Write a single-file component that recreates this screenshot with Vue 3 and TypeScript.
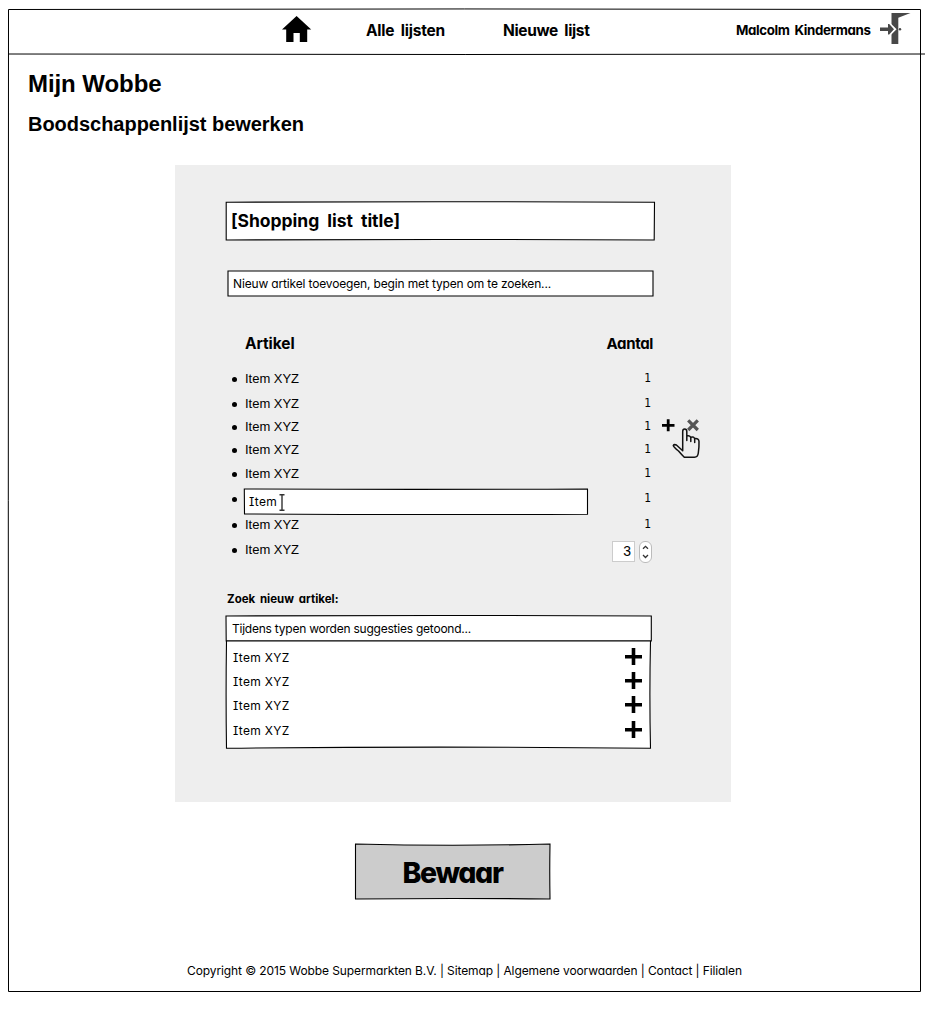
<script setup lang="ts">
import type { Directive } from 'vue'

interface Row {
  label: string
  count: string
  height: number
  kind?: 'actions' | 'edit' | 'stepper'
}

// Spreads the lettering of an element over the given width.
const vFit: Directive<HTMLElement, number> = {
  mounted(el, { value }) {
    const natural = el.getBoundingClientRect().width
    const letters = (el.textContent ?? '').trim().length
    el.style.letterSpacing = `${(value - natural) / letters}px`
  },
}

const rows: Row[] = [
  { label: 'Item XYZ', count: '1', height: 25 },
  { label: 'Item XYZ', count: '1', height: 23 },
  { label: 'Item XYZ', count: '1', height: 23, kind: 'actions' },
  { label: 'Item XYZ', count: '1', height: 24 },
  { label: 'Item XYZ', count: '1', height: 25 },
  { label: 'Item', count: '1', height: 26, kind: 'edit' },
  { label: 'Item XYZ', count: '1', height: 25 },
  { label: 'Item XYZ', count: '3', height: 25, kind: 'stepper' },
]

const suggestions = [
  { label: 'Item XYZ', height: 24 },
  { label: 'Item XYZ', height: 24 },
  { label: 'Item XYZ', height: 25 },
  { label: 'Item XYZ', height: 24 },
]
</script>

<template>
  <div class="page">
    <svg class="frame" width="931" height="1026" viewBox="0 0 931 1026">
      <path d="M8.5 9.5Q465 8.4 920.5 9.5V991.5H8.5Q8.1 500 8.5 9.5Z" />
      <path d="M8.5 54Q465 55 925 54" />
    </svg>

    <header class="top">
      <svg class="home" width="30" height="27" viewBox="0 0 30 27">
        <path d="M14.6 0L29.2 13.5H25.2V26H17.8V17H11.5V26H4.2V13.5H0Z" />
      </svg>
      <a class="nav first"><span v-fit="79">Alle lijsten</span></a>
      <a class="nav second"><span v-fit="86.5">Nieuwe lijst</span></a>
      <span class="user"><span v-fit="134.5">Malcolm Kindermans</span></span>
      <svg class="exit" width="31" height="31" viewBox="0 0 31 31">
        <path d="M11.5 0H30.5L18.3 4.8V31H11.5Z" />
        <path class="halo" d="M7.5 10.5L10.5 11.5L15.2 16.2L10.5 21L7.5 22Z" />
        <path d="M0 14.5H8V11H9.2L14 16.2L9.2 21.4H8V17.9H0Z" />
        <circle cx="20" cy="16.2" r="1.2" />
      </svg>
    </header>

    <h1><span v-fit="133.5">Mijn Wobbe</span></h1>
    <h2><span v-fit="276">Boodschappenlijst bewerken</span></h2>

    <main class="panel">
      <div class="box title">
        <svg class="edge" viewBox="0 0 429 38">
          <path d="M.2 .3Q215 -.8 428.5 .3L428.2 38Q215 37 .2 38Z" />
        </svg>
        <span class="ink" v-fit="169">[Shopping list title]</span>
      </div>
      <div class="box search">
        <svg class="edge" viewBox="0 0 425 26">
          <path d="M0 0Q215 -.8 425 0V25H0Z" />
        </svg>
        <span class="ink" v-fit="318">Nieuw artikel toevoegen, begin met typen om te zoeken...</span>
      </div>

      <div class="columns">
        <span v-fit="49.5">Artikel</span>
        <span class="amount" v-fit="46.5">Aantal</span>
      </div>

      <ul class="items">
        <li v-for="(row, i) in rows" :key="i" :style="{ height: row.height + 'px' }">
          <i class="dot"></i>
          <div v-if="row.kind === 'edit'" class="box edit">
            <svg class="edge" viewBox="0 0 344 26">
              <path d="M.3 0Q170 .8 343.5 0V25.2Q170 26 .5 25Z" />
            </svg>
            <span class="ink" v-fit="28">{{ row.label }}</span>
            <svg class="caret" width="6" height="17" viewBox="0 0 6 17">
              <path d="M.5 .7H2.4L3 1.2L3.6 .7H5.5M3 1V16M.5 16.3H2.4L3 15.8L3.6 16.3H5.5" />
            </svg>
          </div>
          <span v-else class="label" v-fit="54">{{ row.label }}</span>
          <div v-if="row.kind === 'stepper'" class="stepper">
            <span class="value">{{ row.count }}</span>
            <svg width="13" height="22" viewBox="0 0 13 22">
              <rect x=".5" y=".5" width="12" height="21" rx="5.5" />
              <path d="M4 7.8L6.5 5.3L9 7.8M4 14L6.5 16.5L9 14" />
            </svg>
          </div>
          <span v-else class="count">{{ row.count }}</span>
          <svg v-if="row.kind === 'actions'" class="actions" width="40" height="42" viewBox="0 0 40 42">
            <path class="plus" d="M0 9.3H12.5M6.2 3.3V15.2" />
            <path class="cross" d="M26.2 4.4L35.8 14M35.8 4.4L26.2 14" />
            <path
              class="hand"
              d="M20.7 31.5V15.5Q20.7 13 22.7 13Q24.8 13 24.8 15.5V24.5M24.8 20Q28.5 19.2 28.8 22V25.5M28.8 21.3Q32.2 20.2 32.7 23V26.5M32.7 22.6Q36.9 22 37 25.5Q37.2 31 36.3 37Q35.8 41.2 32.5 41.2H22.3Q19.5 38.5 16.5 35Q11.6 31 11.3 29.6Q12 28 14.4 29L20.7 34.7V30"
            />
          </svg>
        </li>
      </ul>

      <p class="prompt"><span v-fit="111.5">Zoek nieuw artikel:</span></p>
      <div class="box query">
        <svg class="edge" viewBox="0 0 425 25">
          <path d="M0 0Q215 -1 425.3 0V25H.2Z" />
        </svg>
        <span class="ink" v-fit="239">Tijdens typen worden suggesties getoond...</span>
      </div>
      <div class="box results">
        <svg class="edge" viewBox="0 0 425 107">
          <path d="M.5 0Q-.3 54 .5 107.3Q215 105 424.5 107.3Q423.3 54 424.5 0Z" />
        </svg>
        <div v-for="(s, i) in suggestions" :key="i" class="result" :style="{ height: s.height + 'px' }">
          <span v-fit="56.5">{{ s.label }}</span>
          <svg width="17" height="17" viewBox="0 0 17 17"><path d="M0 8.7H17M8.5 0V17" /></svg>
        </div>
      </div>
    </main>

    <button class="box save" type="button">
      <svg class="edge" viewBox="0 0 195 55">
        <path d="M.5 0Q98 2.5 195 0Q194.5 27 195 55Q98 54 .5 55Z" />
      </svg>
      <span class="ink" v-fit="100">Bewaar</span>
    </button>

    <footer>
      <span v-fit="555">Copyright © 2015 Wobbe Supermarkten B.V. | Sitemap | Algemene voorwaarden | Contact | Filialen</span>
    </footer>
  </div>
</template>

<style>
body {
  margin: 0;
  background: #fff;
}
</style>

<style scoped>
.page {
  position: relative;
  box-sizing: border-box;
  width: 931px;
  height: 1026px;
  padding-top: 9px;
  overflow: hidden;
  color: #000;
  font: 12px/16px "Comic Sans MS", Inter, sans-serif;
  font-feature-settings: "cv11", "cv08";
}
span {
  white-space: nowrap;
}
.frame {
  position: absolute;
  top: 0;
  left: 0;
  fill: none;
  stroke: #000;
  pointer-events: none;
}
.top {
  display: flex;
  align-items: center;
  height: 42px;
  padding: 0 20px 0 282px;
  font-weight: 700;
  line-height: 20px;
}
.home {
  margin-top: -2px;
}
.nav {
  width: 82px;
  padding-top: 2px;
  font-size: 15.5px;
  word-spacing: 3px;
}
.first {
  margin-left: 54px;
}
.second {
  margin-left: 55px;
}
.user {
  width: 135px;
  margin-left: auto;
  font-size: 13.3px;
  word-spacing: 2px;
}
.exit {
  margin: -3px 0 0 9px;
  fill: #484848;
}
.exit .halo {
  fill: #fff;
  stroke: #fff;
  stroke-width: 2;
}
h1,
h2 {
  margin: 0 0 0 28px;
  font-family: "Liberation Sans", Arial, sans-serif;
  font-weight: 700;
}
h1 {
  margin-top: 19px;
  font-size: 24px;
  line-height: 28px;
}
h2 {
  margin-top: 14px;
  font-size: 20px;
  line-height: 24px;
}
.panel {
  box-sizing: border-box;
  width: 556px;
  height: 637px;
  margin: 29px 0 0 175px;
  padding: 37px 0 0 51px;
  background: #eee;
}
.box {
  position: relative;
  display: flex;
  align-items: center;
}
.edge {
  position: absolute;
  inset: 0;
  width: 100%;
  height: 100%;
  overflow: visible;
  fill: #fff;
  stroke: #000;
  stroke-width: 1.1;
}
.ink {
  position: relative;
}
.title {
  width: 429px;
  height: 38px;
  padding-left: 5px;
  box-sizing: border-box;
  font-size: 17.5px;
  font-weight: 700;
  word-spacing: 4px;
}
.search {
  box-sizing: border-box;
  width: 425px;
  height: 26px;
  margin: 31px 0 0 2px;
  padding-left: 5px;
}
.columns {
  display: flex;
  justify-content: space-between;
  width: 408px;
  margin: 37px 0 0 19px;
  font-size: 15.5px;
  font-weight: 700;
  line-height: 20px;
}
.amount {
  font-size: 15px;
}
.items {
  width: 419px;
  margin: 14px 0 0 6px;
  padding: 0;
  list-style: none;
}
li {
  position: relative;
  display: flex;
  align-items: flex-start;
}
.dot {
  flex: none;
  width: 5px;
  height: 5px;
  margin: 9px 8px 0 0;
  border-radius: 50%;
  background: #000;
}
.label {
  font: 13px/21px "Liberation Sans", Arial, sans-serif;
}
.edit {
  box-sizing: border-box;
  flex: none;
  width: 344px;
  height: 26px;
  margin: 1px 0 0 -1px;
  padding-left: 5px;
}
.caret {
  position: relative;
  margin-left: 2px;
  fill: none;
  stroke: #333;
  stroke-width: 1.4;
}
.count {
  margin-left: auto;
  font: 12px/20px "Comic Sans MS", "DejaVu Sans Condensed", "DejaVu Sans", sans-serif;
}
.stepper {
  display: flex;
  gap: 4px;
  margin: 2px -1px 0 auto;
}
.value {
  box-sizing: border-box;
  width: 23px;
  height: 21px;
  padding-right: 3px;
  border: 1px solid #ccc;
  background: #fff;
  font: 14px/19px "Liberation Sans", Arial, sans-serif;
  text-align: right;
}
.stepper svg {
  fill: #fff;
  stroke: #bbb;
}
.stepper path {
  fill: none;
  stroke: #333;
  stroke-width: 1.3;
}
.actions {
  position: absolute;
  left: 430px;
  top: 0;
  z-index: 1;
  overflow: visible;
  fill: none;
}
.plus {
  stroke: #000;
  stroke-width: 2.8;
}
.cross {
  stroke: #555;
  stroke-width: 3.2;
}
.hand {
  fill: #eee;
  stroke: #111;
  stroke-width: 1.5;
  stroke-linecap: round;
  stroke-linejoin: round;
}
.prompt {
  margin: 27px 0 0 1px;
  font-size: 11.5px;
  font-weight: 700;
  word-spacing: 2px;
}
.query {
  box-sizing: border-box;
  width: 425px;
  height: 25px;
  margin-top: 9px;
  padding-left: 6px;
}
.results {
  display: block;
  box-sizing: border-box;
  width: 425px;
  height: 107px;
  padding: 5px 9px 0 7px;
}
.results .edge {
  z-index: 0;
}
.result {
  position: relative;
  display: flex;
  justify-content: space-between;
  line-height: 24px;
}
.result svg {
  margin-top: 2px;
  stroke: #000;
  stroke-width: 3.6;
}
.save {
  justify-content: center;
  width: 195px;
  height: 55px;
  margin: 42px 0 0 355px;
  padding: 2px 0 0;
  border: 0;
  background: none;
  color: inherit;
  font: 800 28.5px/36px "Comic Sans MS", Inter, sans-serif;
  font-feature-settings: inherit;
}
.save .edge {
  fill: #ccc;
}
footer {
  margin: 64px 0 0 187px;
}
</style>
